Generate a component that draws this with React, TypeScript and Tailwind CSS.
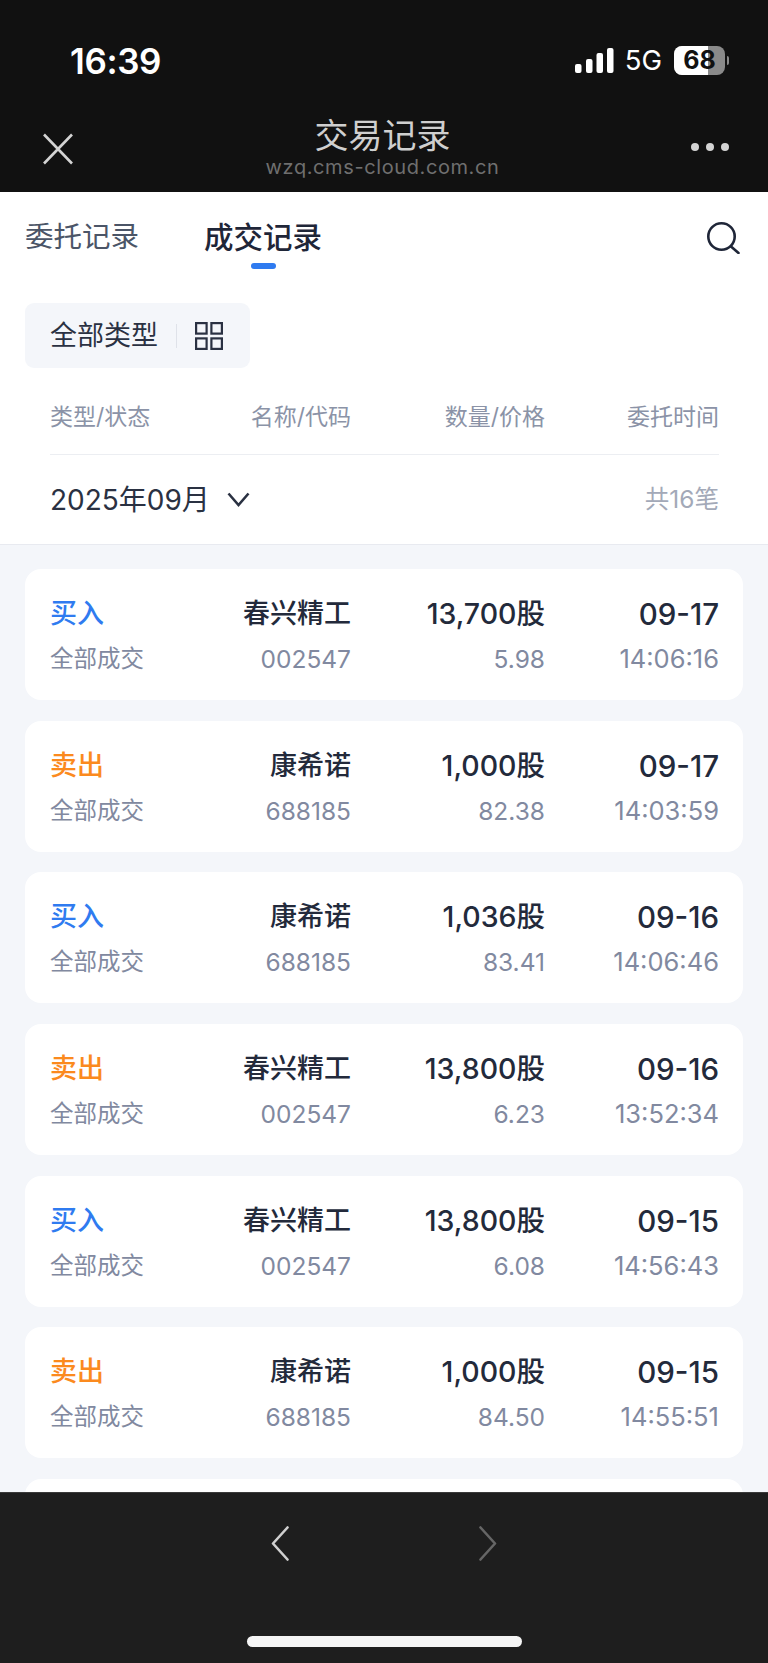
const FONT = "font-['Inter','Noto_Sans_CJK_SC',sans-serif]";

type Trade = {
  side: "买入" | "卖出";
  name: string;
  code: string;
  qty: string;
  price: string;
  date: string;
  time: string;
};

const TRADES: Trade[] = [
  { side: "买入", name: "春兴精工", code: "002547", qty: "13,700股", price: "5.98", date: "09-17", time: "14:06:16" },
  { side: "卖出", name: "康希诺", code: "688185", qty: "1,000股", price: "82.38", date: "09-17", time: "14:03:59" },
  { side: "买入", name: "康希诺", code: "688185", qty: "1,036股", price: "83.41", date: "09-16", time: "14:06:46" },
  { side: "卖出", name: "春兴精工", code: "002547", qty: "13,800股", price: "6.23", date: "09-16", time: "13:52:34" },
  { side: "买入", name: "春兴精工", code: "002547", qty: "13,800股", price: "6.08", date: "09-15", time: "14:56:43" },
  { side: "卖出", name: "康希诺", code: "688185", qty: "1,000股", price: "84.50", date: "09-15", time: "14:55:51" },
];

function StatusBar() {
  return (
    <div className="flex h-[92px] items-start justify-between pl-[70px] pr-[39px] pt-[42px]">
      <span className="text-[35px] leading-[38px] font-semibold tracking-[-0.4px] text-white">16:39</span>
      <div className="mt-[4px] flex items-center">
        <svg width="39" height="25" viewBox="0 0 39 25" fill="#fff">
          <rect x="0" y="16" width="6.5" height="9" rx="2" />
          <rect x="11" y="11" width="6.5" height="14" rx="2" />
          <rect x="21.5" y="5" width="6.5" height="20" rx="2" />
          <rect x="32" y="0" width="6.5" height="25" rx="2" />
        </svg>
        <span className="ml-[11px] text-[27.5px] leading-[29px] text-white">5G</span>
        <div className="relative ml-[12px] h-[29px] w-[51px] overflow-hidden rounded-[8px] bg-[#8a8a8a]">
          <div className="h-full w-[34px] bg-white" />
          <span className="absolute inset-0 text-center text-[25px] leading-[29px] font-bold text-[#111]">68</span>
        </div>
        <div className="ml-[2px] h-[9px] w-[2px] rounded-r-full bg-[#8a8a8a]" />
      </div>
    </div>
  );
}

function TitleBar() {
  return (
    <div className="relative flex h-[100px] items-start justify-between pl-[42px] pr-[39px]">
      <svg className="mt-[41px]" width="32" height="32" viewBox="0 0 32 32" fill="none" stroke="#d4d4d4" strokeWidth="2.6">
        <path d="M2 1.5 30 30.5M30 1.5 2 30.5" />
      </svg>
      <div className="flex flex-col items-center pt-[24px]">
        <span className="text-[34px] leading-[39px] text-[#cfcfcf]">交易记录</span>
        <span className="text-[20px] leading-[24px] tracking-[0.6px] text-[#6f6f6f]">wzq.cms-cloud.com.cn</span>
      </div>
      <div className="mt-[51px] flex gap-[7px]">
        <span className="h-[8px] w-[8px] rounded-full bg-[#d4d4d4]" />
        <span className="h-[8px] w-[8px] rounded-full bg-[#d4d4d4]" />
        <span className="h-[8px] w-[8px] rounded-full bg-[#d4d4d4]" />
      </div>
    </div>
  );
}

function FilterPanel() {
  return (
    <div className="border-b border-[#e8eaf0] bg-white">
      <div className="flex h-[82px] items-start pl-[25px] pr-[28px] pt-[24px]">
        <span className="text-[28.5px] leading-[42px] text-[#4b5567]">委托记录</span>
        <div className="relative ml-[65px] flex flex-col items-center">
          <span className="text-[29.5px] leading-[42px] font-medium text-[#1f2638]">成交记录</span>
          <span className="absolute top-[47px] h-[6px] w-[25px] rounded-full bg-[#2f7bf0]" />
        </div>
        <svg className="ml-auto mt-[6px]" width="34" height="32" viewBox="0 0 34 32" fill="none" stroke="#1f2638" strokeWidth="2.6">
          <circle cx="15.5" cy="14.5" r="13.2" />
          <path d="M25 24.5 32.5 31" strokeLinecap="round" />
        </svg>
      </div>
      <div className="px-[25px] pt-[29px]">
        <div className="flex h-[65px] w-[225px] items-center rounded-[9px] bg-[#f4f6fa] pl-[25px]">
          <span className="text-[27px] leading-none text-[#2a3142]">全部类型</span>
          <span className="ml-[18px] h-[24px] w-px bg-[#dfe2e9]" />
          <svg className="ml-[18px]" width="28" height="28" viewBox="0 0 28 28" fill="none" stroke="#2a3142" strokeWidth="2.2">
            <rect x="1.1" y="1.1" width="10.5" height="10.5" />
            <rect x="16.4" y="1.1" width="10.5" height="10.5" />
            <rect x="1.1" y="16.4" width="10.5" height="10.5" />
            <rect x="16.4" y="16.4" width="10.5" height="10.5" />
          </svg>
        </div>
      </div>
      <div className="pl-[50px] pr-[49px]">
        <div className="grid h-[87px] grid-cols-[149px_152px_194px_174px] items-center border-b border-[#eceef2] pt-[13px] text-[23px] leading-none text-[#8b93a7]">
          <span>类型/状态</span>
          <span className="text-right">名称/代码</span>
          <span className="text-right">数量/价格</span>
          <span className="text-right">委托时间</span>
        </div>
        <div className="flex h-[89px] items-center justify-between">
          <div className="flex items-center">
            <span className="text-[28px] leading-none text-[#2a3142]">2025年09月</span>
            <svg className="ml-[17px]" width="23" height="15" viewBox="0 0 23 15" fill="none" stroke="#2a3142" strokeWidth="2.6">
              <path d="M1.5 1.5 11.5 13 21.5 1.5" />
            </svg>
          </div>
          <span className="text-[24.5px] leading-none text-[#a3a9b8]">共16笔</span>
        </div>
      </div>
    </div>
  );
}

function TradeCard({ trade }: { trade: Trade }) {
  const sideColor = trade.side === "买入" ? "text-[#2f7bf0]" : "text-[#fb8a1e]";
  return (
    <div className="grid h-[131px] shrink-0 grid-cols-[149px_152px_194px_174px] content-start rounded-[16px] bg-white pl-[25px] pr-[24px] pt-[29px]">
      <span className={`text-[27px] leading-[32px] font-medium ${sideColor}`}>{trade.side}</span>
      <span className="text-right text-[27px] leading-[32px] font-medium text-[#232a3b]">{trade.name}</span>
      <span className="text-right text-[28.5px] leading-[32px] font-medium text-[#232a3b]">{trade.qty}</span>
      <span className="text-right text-[29.5px] leading-[32px] font-medium text-[#232a3b]">{trade.date}</span>
      <span className="mt-[13px] text-[23.5px] leading-[32px] text-[#8189a0]">全部成交</span>
      <span className="mt-[13px] text-right text-[24.5px] leading-[32px] text-[#8189a0]">{trade.code}</span>
      <span className="mt-[13px] text-right text-[24.5px] leading-[32px] text-[#8189a0]">{trade.price}</span>
      <span className="mt-[13px] text-right text-[25.5px] leading-[32px] text-[#8189a0]">{trade.time}</span>
    </div>
  );
}

export default function App() {
  return (
    <div className={`flex h-[1663px] w-[768px] flex-col overflow-hidden bg-[#f4f6fa] ${FONT}`}>
      <header className="h-[192px] shrink-0 bg-[#111111]">
        <StatusBar />
        <TitleBar />
      </header>

      <FilterPanel />

      <main className="flex min-h-0 flex-1 flex-col gap-[20.7px] overflow-hidden px-[25px] pt-[24px]">
        {TRADES.map((trade) => (
          <TradeCard key={trade.date + trade.time} trade={trade} />
        ))}
        <div className="h-[131px] shrink-0 rounded-[16px] bg-white" />
      </main>

      <footer className="h-[171px] shrink-0 border-t border-[#3a3a3a] bg-[#1e1e1e]">
        <div className="flex justify-center gap-[190px] pt-[33px]">
          <svg width="18" height="35" viewBox="0 0 18 35" fill="none" stroke="#d0d0d0" strokeWidth="2.6" strokeLinecap="round" strokeLinejoin="round">
            <path d="M16.5 1.5 2 17.5 16.5 33.5" />
          </svg>
          <svg width="18" height="35" viewBox="0 0 18 35" fill="none" stroke="#666666" strokeWidth="2.6" strokeLinecap="round" strokeLinejoin="round">
            <path d="M1.5 1.5 16 17.5 1.5 33.5" />
          </svg>
        </div>
        <div className="mx-auto mt-[75px] h-[11px] w-[275px] rounded-full bg-[#f5f5f5]" />
      </footer>
    </div>
  );
}
